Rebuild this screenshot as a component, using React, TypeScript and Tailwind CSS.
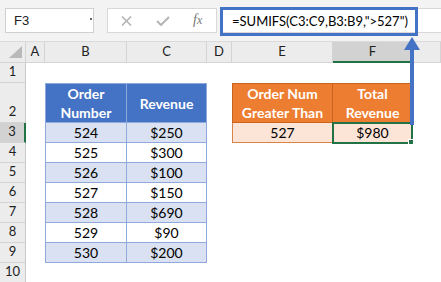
import React from "react";

const letters = ["A", "B", "C", "D", "E", "F", "G"];

const t1 = [
  ["524", "$250"],
  ["525", "$300"],
  ["526", "$100"],
  ["527", "$150"],
  ["528", "$690"],
  ["529", "$90"],
  ["530", "$200"],
];

function RowHead({ n }: { n: number }) {
  const sel = n === 3;
  return (
    <div
      className={
        "flex items-end justify-center pb-[1px] text-[13px] text-[#222] border-b border-[#d4d4d4] " +
        (sel ? "bg-[#d2d2d2] border-r-2 border-r-[#217346]" : "bg-[#ececec] border-r border-r-[#c8c8c8]")
      }
    >
      {n}
    </div>
  );
}

const Empty = () => <div />;

function Cell({ children, className }: { children?: React.ReactNode; className: string }) {
  return <div className={"flex items-center justify-center text-center text-[14px] " + className}>{children}</div>;
}

export default function App() {
  const rows: React.ReactNode[] = [];
  for (let r = 1; r <= 10; r++) {
    const cells: React.ReactNode[] = [<RowHead key="h" n={r} />];
    cells.push(<Empty key="A" />);
    if (r === 2) {
      cells.push(
        <Cell key="B" className="leading-[19px] font-bold text-white bg-[#4472c4] border border-[#8eaadb]">
          Order<br />Number
        </Cell>
      );
      cells.push(
        <Cell key="C" className="font-bold text-white bg-[#4472c4] border-y border-r border-[#8eaadb]">
          Revenue
        </Cell>
      );
    } else if (r >= 3 && r <= 9) {
      const i = r - 3;
      const bg = i % 2 === 0 ? "bg-[#d9e1f2]" : "bg-white";
      cells.push(
        <Cell key="B" className={"text-black border-x border-b border-[#8eaadb] " + bg}>
          {t1[i][0]}
        </Cell>
      );
      cells.push(
        <Cell key="C" className={"text-black border-r border-b border-[#8eaadb] " + bg}>
          {t1[i][1]}
        </Cell>
      );
    } else {
      cells.push(<Empty key="B" />, <Empty key="C" />);
    }
    cells.push(<Empty key="D" />);
    if (r === 2) {
      cells.push(
        <Cell key="E" className="leading-[19px] font-bold text-white bg-[#ed7d31] border border-[#c9641f]">
          Order Num<br />Greater Than
        </Cell>
      );
      cells.push(
        <Cell key="F" className="leading-[19px] font-bold text-white bg-[#ed7d31] border-y border-r border-[#c9641f]">
          Total<br />Revenue
        </Cell>
      );
    } else if (r === 3) {
      cells.push(
        <Cell key="E" className="text-black bg-[#fce4d6] border-x border-b border-[#d9834a]">
          527
        </Cell>
      );
      cells.push(
        <Cell key="F" className="relative text-black bg-[#fce4d6] border-r border-b border-[#d9834a]">
          $980
          <div className="absolute -left-[1px] -top-[1px] -right-[1px] -bottom-[2px] border-2 border-[#217346]" />
          <div className="absolute -right-[2px] -bottom-[3px] w-[6px] h-[6px] bg-[#217346] border border-white" />
        </Cell>
      );
    } else {
      cells.push(<Empty key="E" />, <Empty key="F" />);
    }
    cells.push(<Empty key="G" />);
    rows.push(<React.Fragment key={r}>{cells}</React.Fragment>);
  }

  return (
    <div className="relative w-[441px] h-[282px] overflow-hidden bg-white font-['Lato',_'Noto_Sans',_sans-serif]">
      {/* toolbar */}
      <div className="flex items-center h-[42px] bg-[#f3f3f3] border-b border-[#dadada]">
        <div className="relative ml-[5px] w-[89px] h-[25px] bg-white border border-[#d0d0d0] flex items-center pl-[8px] text-[13px] text-[#222] font-['Liberation_Sans',_sans-serif]">
          F3
          <div className="absolute right-[1px] top-[9px] w-[2px] h-[2px] bg-[#666]" />
        </div>
        <div className="relative ml-[13px] w-[110px] h-[25px] bg-white border border-[#d8d8d8] flex items-center">
          <svg className="ml-[13px]" width="11" height="10" viewBox="0 0 11 10">
            <path d="M1 0.5 L10 9.5 M10 0.5 L1 9.5" stroke="#b4b4b4" strokeWidth="1.6" />
          </svg>
          <svg className="ml-[24px]" width="14" height="10" viewBox="0 0 14 10">
            <path d="M1 5 L5 9 L13 1" stroke="#b4b4b4" strokeWidth="2" fill="none" />
          </svg>
          <span className="ml-[23px] -mt-[2px] text-[14px] italic text-[#777] font-['Liberation_Serif',_serif]">
            f<span className="text-[12px]">x</span>
          </span>
        </div>
        <div className="ml-[3px] flex-1 h-[25px] bg-white border-y border-[#d8d8d8]" />
      </div>
      {/* formula highlight */}
      <div className="absolute left-[220px] top-[7px] w-[198px] h-[29px] border-[3px] border-[#4472c4] flex items-center pl-[9px] text-[13px] text-black whitespace-nowrap">
        =SUMIFS(C3:C9,B3:B9,"&gt;527")
      </div>
      {/* grid */}
      <div className="grid grid-cols-[26px_19px_82px_80px_25px_101px_80px_28px] grid-rows-[21px_20px_40px_repeat(8,20px)]">
        <div className="relative bg-[#ececec] border-r border-b border-[#d4d4d4]">
          <svg className="absolute right-[3px] bottom-[4px]" width="13" height="12" viewBox="0 0 13 12">
            <polygon points="13,0 13,12 0,12" fill="#b9b9b9" />
          </svg>
        </div>
        {letters.map((l) => (
          <div
            key={l}
            className={
              "flex items-center justify-center text-[13px] text-[#222] border-r border-[#d4d4d4] " +
              (l === "F" ? "bg-[#d2d2d2] border-b-2 border-b-[#217346]" : "bg-[#ececec] border-b border-b-[#d4d4d4]")
            }
          >
            {l === "G" ? "" : l}
          </div>
        ))}
        {rows}
      </div>
      {/* arrow */}
      <svg className="absolute left-[402px] top-[36px]" width="20" height="90" viewBox="0 0 20 90">
        <polygon points="10,1 18,14 2,14" fill="#4472c4" />
        <rect x="8" y="13" width="4" height="76" fill="#4472c4" />
      </svg>
    </div>
  );
}
